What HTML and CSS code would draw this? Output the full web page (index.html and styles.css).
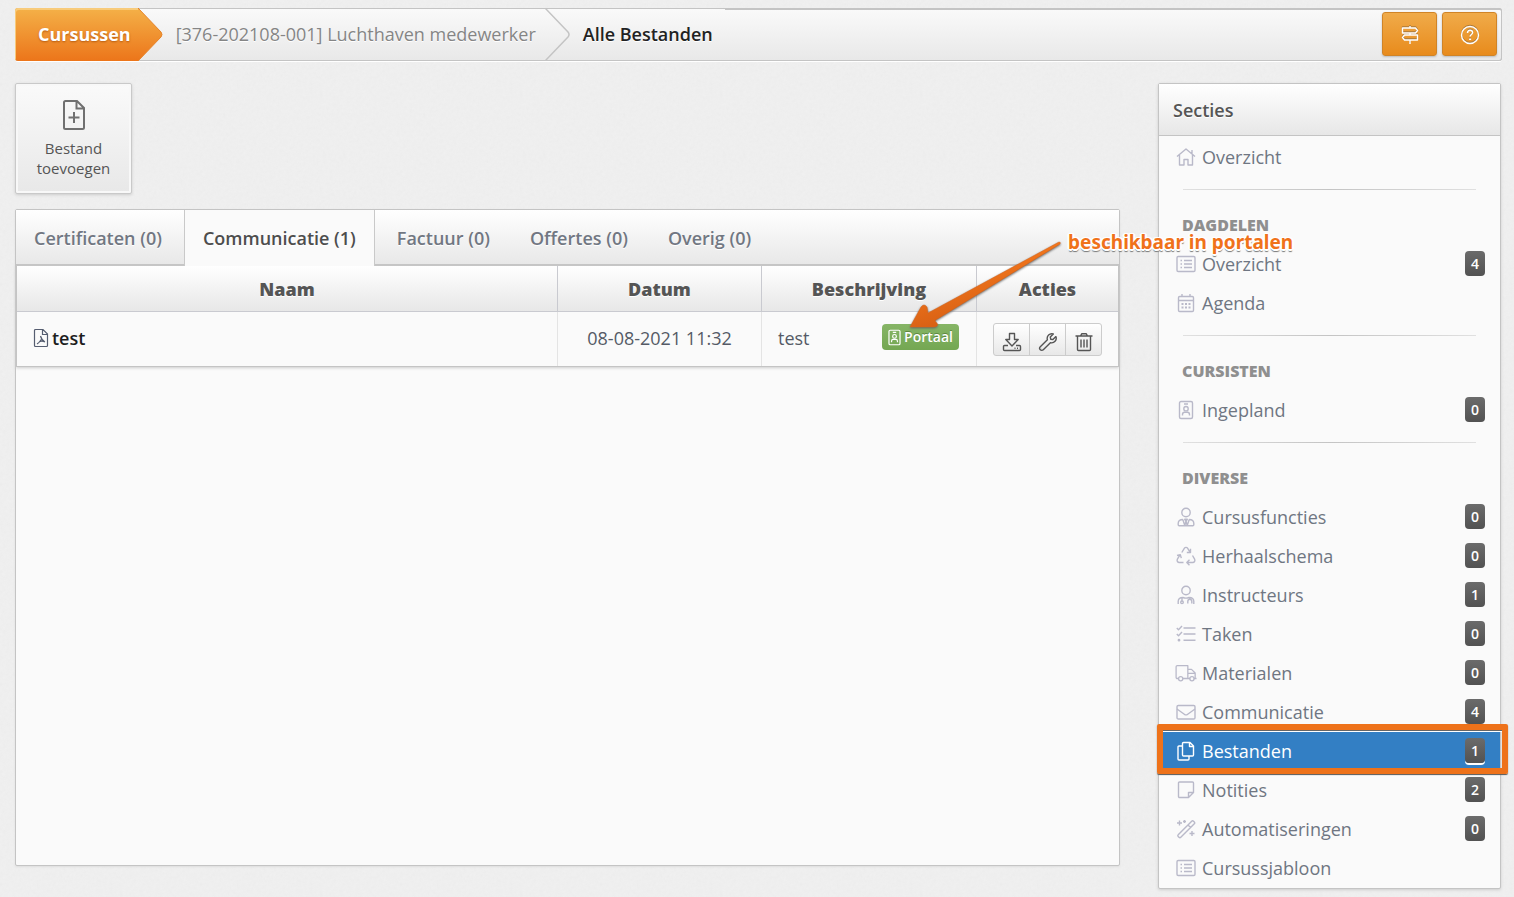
FILE: index.html
```html
<!DOCTYPE html>
<html lang="nl">
<head>
    <meta charset="UTF-8">
    <meta name="viewport" content="width=device-width, initial-scale=1.0">
    <title>Alle Bestanden</title>
    <link rel="stylesheet" href="styles.css">
</head>
<body>

<!-- Iconen -->
<svg class="sprite" aria-hidden="true">
    <symbol id="i-signs" viewBox="0 0 20 20"><path d="M10 1v2M10 8v2M10 15v4M2.500 3h13l2 2.500-2 2.500h-13zM17.500 10H4.500l-2 2.500 2 2.500h13z"/></symbol>
    <symbol id="i-help" viewBox="0 0 20 20"><circle cx="10" cy="10" r="8.500"/><path d="M7.500 8c0-1.700 1.100-2.800 2.600-2.800s2.500 1 2.500 2.300c0 1.900-2.500 2-2.500 4"/><path d="M10.100 13.500v1.500" stroke-width="2"/></symbol>
    <symbol id="i-file-plus" viewBox="0 0 24 32"><path d="M3.500 2h11.500l7 7v19.500a1.500 1.500 0 0 1-1.500 1.500h-17a1.500 1.500 0 0 1-1.500-1.500v-25a1.500 1.500 0 0 1 1.500-1.500zM14.500 2v7.500h7.500M12 13v11M6.500 18.500h11"/></symbol>
    <symbol id="i-pdf" viewBox="0 0 16 20"><path d="M2.500 1.500h7.500l4.500 4.500v11.500a1 1 0 0 1-1 1h-11a1 1 0 0 1-1-1v-15a1 1 0 0 1 1-1zM9.500 1.500v5h5M7.500 8c.8 3 2 4.800 4.500 6M8.200 11.500c-1 2.200-2.500 3.500-4.200 4.500M6 13.800c2-.8 4-.8 6 .2"/></symbol>
    <symbol id="i-badge" viewBox="0 0 20 20"><rect x="3.500" y="1.500" width="13" height="17" rx="1.500"/><path d="M8 4h4M6.500 15.500v-1c0-1.400.9-2.200 2-2.200h3c1.100 0 2 .8 2 2.200v1"/><circle cx="10" cy="8.700" r="2.200"/></symbol>
    <symbol id="i-download" viewBox="0 0 20 20"><path d="M7.500 1.500h5v6h3.700l-6.200 6.500-6.200-6.500h3.700zM6 13.500H2.500a1 1 0 0 0-1 1v3a1 1 0 0 0 1 1h15a1 1 0 0 0 1-1v-3a1 1 0 0 0-1-1h-3.500M12.500 16.200h1M15 16.200h1"/></symbol>
    <symbol id="i-wrench" viewBox="0 0 20 20"><path d="M17.900 4.600l-3 3-2.200-.4-.4-2.200 3-3a4.600 4.600 0 0 0-5.900 5.700l-7.100 7.100a2.100 2.100 0 0 0 3 3l7.100-7.100a4.600 4.600 0 0 0 5.500-6.100z"/><path d="M3.700 16.300h.1"/></symbol>
    <symbol id="i-trash" viewBox="0 0 20 20"><path d="M1.500 4h17M3.500 4v13.500a1 1 0 0 0 1 1h11a1 1 0 0 0 1-1v-13.500M6.500 4l1.200-2.200h4.600l1.200 2.200M7 7.500v8M10 7.500v8M13 7.500v8"/></symbol>
    <symbol id="i-home" viewBox="0 0 20 20"><path d="M1 9.500l9-7.500 9 7.500M16 7v-4M3.500 8v10h4.500v-5.500h4v5.500h4.500v-10"/></symbol>
    <symbol id="i-list" viewBox="0 0 20 20"><rect x="1" y="2.500" width="18" height="15" rx="1.200"/><path d="M8 6.500h8M8 10h8M8 13.500h8M4.500 6.500h1.500M4.500 10h1.500M4.500 13.500h1.500"/></symbol>
    <symbol id="i-calendar" viewBox="0 0 20 20"><rect x="2.500" y="3.500" width="15" height="15" rx="1.200"/><path d="M2.500 7.500h15M6 1v2.500M14 1v2.500"/><path d="M5.500 11h2M9 11h2M12.500 11h2M5.500 14.500h2M9 14.500h2M12.500 14.500h2" stroke-width="2"/></symbol>
    <symbol id="i-user-tie" viewBox="0 0 20 20"><circle cx="10" cy="5.500" r="4.200"/><path d="M7 12.500c-3 0-4.800 1.500-4.800 4v1.200c0 .6.400 1 1 1h13.600c.6 0 1-.4 1-1v-1.200c0-2.500-1.800-4-4.800-4M6.800 12.500l2 6 1.200-4.500 1.200 4.500 2-6M8.700 12.300h2.600l-1.300 2z"/></symbol>
    <symbol id="i-recycle" viewBox="0 0 20 20"><path d="M5.800 6.500l2.500-4.200c.8-1.200 2.600-1.200 3.400 0l2.300 3.900M14.500 2.800v3.700h-3.700M16.500 9.500l2.100 3.600c.8 1.500-.1 3.400-1.900 3.400h-5M13.500 13.800l-2.700 2.700 2.700 2.700M7.500 16.500h-4.200c-1.800 0-2.700-1.900-1.900-3.400l2.600-4.300M1 9.500l3.300-.9 1 3.500"/></symbol>
    <symbol id="i-teacher" viewBox="0 0 20 20"><circle cx="10" cy="5.500" r="4.200"/><path d="M2.200 19v-2.500c0-2.600 1.900-4 4.800-4 2 .8 4 .8 6 0 2.900 0 4.800 1.400 4.800 4v2.500M6 12.700v3.300M13.800 12.700v1.500M11.800 18.500v-2c0-3 4-3 4 0v2"/><circle cx="6" cy="17.300" r="1.300"/></symbol>
    <symbol id="i-tasks" viewBox="0 0 20 20"><path d="M7.500 4h12M7.500 10h12M7.500 16.200h12M.8 4l1.700 1.700 3.500-3.700M.8 10l1.700 1.700 3.500-3.700"/><circle cx="3" cy="16.200" r=".7"/></symbol>
    <symbol id="i-truck" viewBox="0 0 24 20"><path d="M4 16h-1.500c-.8 0-1.300-.5-1.300-1.300v-11.400c0-.8.500-1.300 1.300-1.300h11.500v14h-5.500M14.500 6h3.500l4 4v6M14.500 10.500h7.500M14 16h2.500M20.500 16h3"/><circle cx="6.200" cy="16.300" r="2.300"/><circle cx="18.500" cy="16.300" r="2.300"/></symbol>
    <symbol id="i-mail" viewBox="0 0 20 20"><rect x="1" y="3.500" width="18" height="13.500" rx="1.300"/><path d="M1 7l7.300 5.200c1 .8 2.400.8 3.400 0l7.300-5.200"/></symbol>
    <symbol id="i-copy" viewBox="0 0 20 20"><path d="M7.500 1.500h6.500l3.500 3.500v9a1 1 0 0 1-1 1h-9a1 1 0 0 1-1-1v-11.500a1 1 0 0 1 1-1zM13.500 1.500v4h4M6.500 5h-3.500a1 1 0 0 0-1 1v12a1 1 0 0 0 1 1h9a1 1 0 0 0 1-1v-3"/></symbol>
    <symbol id="i-note" viewBox="0 0 20 20"><path d="M3.500 2h13a1 1 0 0 1 1 1v9.500l-5 5h-9a1 1 0 0 1-1-1v-13.500a1 1 0 0 1 1-1zM12.500 17.500v-5h5"/></symbol>
    <symbol id="i-magic" viewBox="0 0 20 20"><path d="M2.200 15.700l13.500-13.500c.6-.6 1.200-.6 1.800 0l.8.800c.6.600.6 1.200 0 1.800l-13.500 13.500c-.6.600-1.200.6-1.800 0l-.8-.8c-.6-.6-.6-1.200 0-1.800zM12 6l2.500 2.500M3.500 1.500v5M1 4h5M8.500 1v3M7 2.500h3M16 12v5M13.500 14.500h5"/></symbol>
</svg>

<header class="topbar">
    <nav class="crumbs" aria-label="Kruimelpad">
        <a href="#" class="crumb crumb-home">Cursussen</a>
        <svg class="crumb-arrow" viewBox="0 0 25 53" aria-hidden="true">
            <defs>
                <linearGradient id="arrow-fill" x1="0" y1="0" x2="0" y2="1">
                    <stop offset="0" stop-color="#f4b148"/>
                    <stop offset="1" stop-color="#ec751a"/>
                </linearGradient>
            </defs>
            <path d="M0 0L23 24Q25 26.500 23 29L0 53z" fill="url(#arrow-fill)"/>
            <path d="M0 0L23 24Q25 26.500 23 29L0 53" fill="none" stroke="#e5832a"/>
        </svg>
        <a href="#" class="crumb">[376-202108-001] Luchthaven medewerker</a>
        <svg class="crumb-arrow" viewBox="0 0 25 53" aria-hidden="true">
            <path d="M0 0L23 24Q25 26.500 23 29L0 53" fill="none" stroke="#c4c4c4" stroke-width="1.500"/>
        </svg>
        <span class="crumb crumb-current">Alle Bestanden</span>
    </nav>
    <div class="topbar-actions">
        <button class="btn-orange" aria-label="Rondleiding"><svg class="icon"><use href="#i-signs"/></svg></button>
        <button class="btn-orange" aria-label="Help"><svg class="icon"><use href="#i-help"/></svg></button>
    </div>
</header>

<div class="layout">
    <main class="main">
        <button class="btn-tile">
            <svg class="icon-tile"><use href="#i-file-plus"/></svg>
            <span>Bestand toevoegen</span>
        </button>

        <section class="panel">
            <nav class="tabs">
                <a href="#" class="tab">Certificaten (0)</a>
                <a href="#" class="tab active">Communicatie (1)</a>
                <a href="#" class="tab">Factuur (0)</a>
                <a href="#" class="tab">Offertes (0)</a>
                <a href="#" class="tab">Overig (0)</a>
            </nav>
            <table class="files">
                <thead>
                    <tr>
                        <th>Naam</th>
                        <th class="col-date">Datum</th>
                        <th class="col-desc">Beschrijving</th>
                        <th class="col-actions">Acties</th>
                    </tr>
                </thead>
                <tbody>
                    <tr>
                        <td><a href="#" class="file-link"><svg class="icon-pdf"><use href="#i-pdf"/></svg>test</a></td>
                        <td class="date">08-08-2021 11:32</td>
                        <td>
                            <div class="desc">
                                <span>test</span>
                                <span class="label-portal">
                                    <svg class="icon"><use href="#i-badge"/></svg>Portaal
                                    <svg class="note-arrow" viewBox="0 0 156 92" aria-hidden="true">
                                        <defs>
                                            <linearGradient id="note-fill" x1="0" y1="0" x2=".5" y2="1">
                                                <stop offset="0.400" stop-color="#f2761c"/>
                                                <stop offset="1" stop-color="#d05a12"/>
                                            </linearGradient>
                                        </defs>
                                        <path d="M152 3Q154 3 153 5L32 79Q26 82 29 83Q33 87 27 88L3 88L14 68Q17 64 20 68L21 74z" fill="url(#note-fill)" stroke="#d9641a" stroke-width=".5"/>
                                    </svg>
                                    <strong class="note-text">beschikbaar in portalen</strong>
                                </span>
                            </div>
                        </td>
                        <td>
                            <div class="btn-group">
                                <button aria-label="Downloaden"><svg class="icon"><use href="#i-download"/></svg></button>
                                <button aria-label="Bewerken"><svg class="icon"><use href="#i-wrench"/></svg></button>
                                <button aria-label="Verwijderen"><svg class="icon"><use href="#i-trash"/></svg></button>
                            </div>
                        </td>
                    </tr>
                </tbody>
            </table>
        </section>
    </main>

    <aside class="sidebar">
        <h2 class="sidebar-title">Secties</h2>
        <nav>
            <a href="#" class="item"><svg class="icon"><use href="#i-home"/></svg>Overzicht</a>

            <hr>
            <h3>Dagdelen</h3>
            <a href="#" class="item"><svg class="icon"><use href="#i-list"/></svg>Overzicht<span class="count">4</span></a>
            <a href="#" class="item"><svg class="icon"><use href="#i-calendar"/></svg>Agenda</a>

            <hr>
            <h3>Cursisten</h3>
            <a href="#" class="item"><svg class="icon"><use href="#i-badge"/></svg>Ingepland<span class="count">0</span></a>

            <hr>
            <h3>Diverse</h3>
            <a href="#" class="item"><svg class="icon"><use href="#i-user-tie"/></svg>Cursusfuncties<span class="count">0</span></a>
            <a href="#" class="item"><svg class="icon"><use href="#i-recycle"/></svg>Herhaalschema<span class="count">0</span></a>
            <a href="#" class="item"><svg class="icon"><use href="#i-teacher"/></svg>Instructeurs<span class="count">1</span></a>
            <a href="#" class="item"><svg class="icon"><use href="#i-tasks"/></svg>Taken<span class="count">0</span></a>
            <a href="#" class="item"><svg class="icon"><use href="#i-truck"/></svg>Materialen<span class="count">0</span></a>
            <a href="#" class="item"><svg class="icon"><use href="#i-mail"/></svg>Communicatie<span class="count">4</span></a>
            <a href="#" class="item active"><svg class="icon"><use href="#i-copy"/></svg>Bestanden<span class="count">1</span></a>
            <a href="#" class="item"><svg class="icon"><use href="#i-note"/></svg>Notities<span class="count">2</span></a>
            <a href="#" class="item"><svg class="icon"><use href="#i-magic"/></svg>Automatiseringen<span class="count">0</span></a>
            <a href="#" class="item"><svg class="icon"><use href="#i-list"/></svg>Cursussjabloon</a>
        </nav>
    </aside>
</div>

</body>
</html>
```

FILE: styles.css
```css
* {
    margin: 0;
    padding: 0;
    box-sizing: border-box;
}

body {
    padding: 8px 12px 8px 15px;
    background-color: #f0f0f0;
    /* lichte papierstructuur */
    background-image: url("data:image/svg+xml,%3Csvg xmlns='http://www.w3.org/2000/svg' width='200' height='200'%3E%3Cfilter id='n'%3E%3CfeTurbulence type='fractalNoise' baseFrequency='.3' numOctaves='3' stitchTiles='stitch'/%3E%3CfeColorMatrix type='saturate' values='0'/%3E%3C/filter%3E%3Crect width='200' height='200' filter='url(%23n)' opacity='.06'/%3E%3C/svg%3E");
    color: #555;
    font-family: "Open Sans", sans-serif;
    font-size: 18px;
    line-height: 24px;
}

a {
    color: inherit;
    text-decoration: none;
}

button {
    font: inherit;
    color: inherit;
    cursor: pointer;
}

svg {
    display: block;
}

.sprite {
    position: absolute;
    width: 0;
    height: 0;
}

.icon {
    width: 20px;
    height: 20px;
    flex: none;
    fill: none;
    stroke: currentColor;
    stroke-width: 1.4;
    stroke-linejoin: round;
}

/* Bovenbalk */
.topbar {
    display: flex;
    height: 53px;
    background: linear-gradient(#fafafa, #e8e8e8);
    border-radius: 3px;
    box-shadow: inset 0 0 0 1px #c4c4c4, 0 1px 0 #fff;
}

.crumbs {
    display: flex;
    flex: none;
}

.crumb {
    display: flex;
    align-items: center;
    padding: 0 9px 2px 13px;
    color: #858585;
    text-shadow: 0 1px 0 #fff;
}

.crumb-home {
    padding: 0 7px 2px 23px;
    background: linear-gradient(#f4b148, #ec751a);
    border-radius: 3px 0 0 3px;
    box-shadow: inset 1px 2px 0 #f8cb7b;
    color: #fff;
    font-weight: 700;
    text-shadow: 0 1px 2px #b75c10;
}

.crumb-current {
    padding-right: 12px;
    color: #222;
    font-weight: 600;
}

.crumb-arrow {
    width: 25px;
    height: 53px;
}

.topbar-actions {
    display: flex;
    flex: 1;
    justify-content: flex-end;
    gap: 5px;
    padding: 2px 4px 0 0;
    border-top: 2px solid #c4c4c4;
    border-right: 1px solid #c4c4c4;
    border-radius: 0 3px 3px 0;
}

.btn-orange {
    display: flex;
    align-items: center;
    justify-content: center;
    width: 55px;
    height: 44px;
    padding-top: 2px;
    background: linear-gradient(#f0ab4a, #e88b1c);
    border: 1px solid #d08427;
    border-radius: 3px;
    box-shadow: 0 1px 2px #bbb;
    color: #fff;
}

.btn-orange .icon {
    filter: drop-shadow(0 -1px 0 #a8773a);
}

/* Indeling */
.layout {
    display: grid;
    grid-template-columns: 1fr 343px;
    gap: 38px;
    margin: 22px 1px 0 0;
}

.main {
    display: flex;
    flex-direction: column;
    align-items: flex-start;
    gap: 15px;
    padding-bottom: 23px;
}

.btn-tile {
    display: flex;
    flex-direction: column;
    align-items: center;
    gap: 7px;
    width: 117px;
    height: 111px;
    padding: 15px 16px 0;
    background: linear-gradient(#fafafa, #e8e8e8);
    border: 1px solid #c9c9c9;
    border-radius: 2px;
    box-shadow: inset 0 0 0 2px #f8f8f8, 0 1px 3px #ccc;
    font-size: 15px;
    line-height: 20px;
}

.icon-tile {
    width: 24px;
    height: 32px;
    fill: none;
    stroke: #707070;
    stroke-width: 2;
}

.panel {
    flex: 1;
    width: 100%;
    background: #fafafa;
    border: 1px solid #c4c4c4;
    border-radius: 2px;
    box-shadow: 0 1px 2px #ddd;
}

/* Tabbladen */
.tabs {
    display: flex;
    gap: 4px;
    height: 56px;
    background: linear-gradient(#fff, #e7e7e7);
    box-shadow: inset 0 -2px 0 #c4c4c4;
}

.tab {
    display: flex;
    align-items: center;
    padding: 0 18px;
    color: #717782;
    font-weight: 600;
    text-shadow: 0 1px 0 #fff;
}

.tab.active {
    background: #fafafa;
    border: 1px solid #c9c9c9;
    border-width: 0 1px;
    color: #4d4d4d;
}

/* Tabel */
.files {
    width: 100%;
    border: 1px solid #c4c4c4;
    border-width: 0 1px 1px;
    border-collapse: separate;
    border-spacing: 0;
    table-layout: fixed;
    box-shadow: 0 1px 3px #ccc;
}

.files th {
    height: 46px;
    background: linear-gradient(#fff, #e7e7e7);
    border-bottom: 1px solid #c9cad0;
    font-weight: 800;
    text-shadow: 0 1px 0 #fff;
}

.files td {
    height: 54px;
    padding: 0 16px 2px;
    color: #555a66;
}

.files th + th {
    border-left: 1px solid #c9cad0;
}

.files td + td {
    border-left: 1px solid #e4e4e4;
}

.files .col-date {
    width: 204px;
}

.files .col-desc {
    width: 215px;
}

.files .col-actions {
    width: 142px;
}

.files .date {
    text-align: center;
}

.file-link {
    display: flex;
    align-items: center;
    gap: 3px;
    color: #1d1d1d;
    font-weight: 600;
}

.icon-pdf {
    width: 16px;
    height: 20px;
    fill: none;
    stroke: #555d70;
    stroke-width: 1.2;
}

.desc {
    display: flex;
    align-items: center;
    justify-content: space-between;
    padding-right: 1px;
}

.label-portal {
    position: relative;
    display: flex;
    align-items: center;
    gap: 1px;
    height: 26px;
    margin-bottom: 2px;
    padding: 0 6px 0 4px;
    background: linear-gradient(#86b566, #74a752);
    border-radius: 4px;
    color: #fff;
    font-size: 14px;
    font-weight: 600;
    text-shadow: 0 -1px 0 #5d8741;
}

.label-portal .icon {
    width: 17px;
    height: 17px;
}

/* Aantekeningen boven op het scherm */
.note-arrow {
    position: absolute;
    left: 25px;
    bottom: 19px;
    z-index: 2;
    width: 156px;
    height: 92px;
    filter: drop-shadow(0 1px 1px #666);
}

.note-text {
    position: absolute;
    left: 186px;
    bottom: 96px;
    z-index: 2;
    color: #f0721a;
    font-family: "Noto Sans", sans-serif;
    font-size: 19px;
    font-weight: 700;
    line-height: 24px;
    white-space: nowrap;
    text-shadow: -1px -1px 0 #fff, 1px -1px 0 #fff, -1px 1px 0 #fff, 1px 1px 0 #fff, -2px 0 0 #fff, 2px 0 0 #fff, 0 2px 0 #fff, 0 3px 1px #777;
}

.btn-group {
    display: flex;
    width: 109px;
    height: 33px;
    margin-top: 3px;
    background: linear-gradient(#fff, #e8e8e8);
    border: 1px solid #ccc;
    border-radius: 3px;
}

.btn-group button {
    display: flex;
    flex: 1;
    align-items: center;
    justify-content: center;
    padding-top: 5px;
    background: none;
    border: 0;
    color: #555;
}

.btn-group button + button {
    border-left: 1px solid #ccc;
}

/* Zijbalk */
.sidebar {
    padding-bottom: 2px;
    background: #fafafa;
    border: 1px solid #c4c4c4;
    border-radius: 2px;
    box-shadow: 0 1px 3px #ccc;
}

.sidebar-title {
    height: 52px;
    padding-left: 14px;
    background: linear-gradient(#fff, #e7e7e7);
    border-bottom: 1px solid #c4c4c4;
    font-size: 18px;
    font-weight: 600;
    line-height: 52px;
    text-shadow: 0 1px 0 #fff;
}

.sidebar hr {
    height: 1px;
    margin: 14px 24px 0;
    background: linear-gradient(90deg, #e0e0e0, #c4c4c4, #e0e0e0);
    border: 0;
}

.sidebar h3 {
    padding: 24px 23px 7px;
    color: #8f8f8f;
    font-size: 16px;
    font-weight: 800;
    line-height: 22px;
    text-transform: uppercase;
}

.item {
    position: relative;
    display: flex;
    align-items: center;
    gap: 5px;
    height: 39px;
    padding: 2px 15px 0 16px;
    color: #6f7682;
}

.item .icon {
    width: 22px;
    color: #b9b9c9;
}

.item.active {
    background: #337fc4;
    color: #fff;
}

.item.active .icon {
    color: #fff;
}

/* oranje kader om de actieve sectie */
.item.active::after {
    content: "";
    position: absolute;
    inset: -6px -8px -5px -2px;
    z-index: 1;
    border: 6px solid #ee721a;
    border-radius: 2px;
    box-shadow: 0 1px 1px #555, inset 0 1px 0 #666, inset 0 2px 0 #fff;
}

.count {
    width: 20px;
    height: 25px;
    margin-left: auto;
    background: linear-gradient(#6b6b6b, #525252);
    border-radius: 4px;
    color: #fff;
    font-size: 14px;
    font-weight: 600;
    line-height: 25px;
    text-align: center;
}

.item.active .count {
    box-shadow: 0 2px 0 #fff;
}
```
